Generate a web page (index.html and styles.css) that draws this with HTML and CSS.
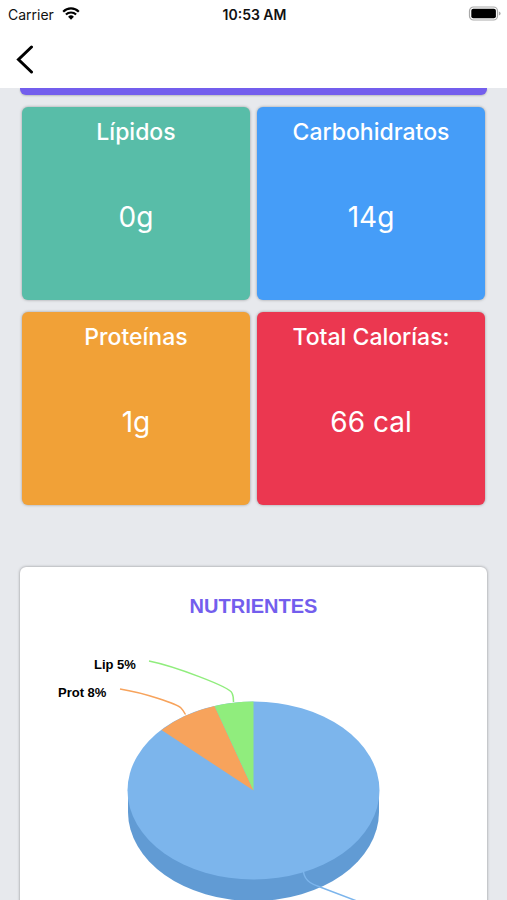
FILE: index.html
```html
<!DOCTYPE html>
<html lang="es">
<head>
  <meta charset="UTF-8">
  <meta name="viewport" content="width=device-width, initial-scale=1">
  <title>Nutrientes</title>
  <link rel="stylesheet" href="styles.css">
</head>
<body>

  <header class="header">
    <div class="status-bar">
      <div class="status-left">
        <span>Carrier</span>
        <svg width="18" height="14" viewBox="0 0 18 14" aria-hidden="true">
          <path d="M1.2 4.7 A11 11 0 0 1 16.8 4.7" fill="none" stroke="#000" stroke-width="2.2"/>
          <path d="M3.9 7.6 A7.2 7.2 0 0 1 14.1 7.6" fill="none" stroke="#000" stroke-width="2.1"/>
          <path d="M9 12.7 L6.1 9.8 A4.1 4.1 0 0 1 11.9 9.8 Z" fill="#000"/>
        </svg>
      </div>
      <span class="status-time">10:53 AM</span>
      <div class="status-right">
        <svg width="33" height="16" viewBox="0 0 33 16" aria-hidden="true">
          <rect x="1.5" y="1" width="28" height="13" rx="4" fill="#fff" stroke="#a9a9a9" stroke-width="1.2"/>
          <rect x="3.3" y="2.8" width="24.6" height="9.4" rx="2" fill="#000"/>
          <path d="M30.9 5.4 Q32.6 6 32.6 7.5 Q32.6 9 30.9 9.6 Z" fill="#a9a9a9"/>
        </svg>
      </div>
    </div>
    <nav class="nav-bar">
      <button type="button" class="back-button" aria-label="Volver">
        <svg width="18" height="30" viewBox="0 0 18 30" aria-hidden="true">
          <path d="M15.5 3 L2.5 15.5 L15.5 28" fill="none" stroke="#000" stroke-width="3" stroke-linecap="round"/>
        </svg>
      </button>
    </nav>
  </header>

  <main class="content">
    <div class="banner"></div>

    <section class="cards">
      <div class="card lipidos">
        <h2>Lípidos</h2>
        <p>0g</p>
      </div>
      <div class="card carbohidratos">
        <h2>Carbohidratos</h2>
        <p>14g</p>
      </div>
      <div class="card proteinas">
        <h2>Proteínas</h2>
        <p>1g</p>
      </div>
      <div class="card calorias">
        <h2>Total Calorías:</h2>
        <p>66 cal</p>
      </div>
    </section>

    <section class="chart-card">
      <h3>NUTRIENTES</h3>
      <svg class="chart" viewBox="0 0 467 300" role="img" aria-label="Nutrientes">
        <!-- borde inferior del pastel -->
        <path d="M108 160 V182 A125.5 89 0 0 0 359 182 V160 Z" fill="#619bd4"/>
        <ellipse cx="233.5" cy="160.5" rx="126" ry="89" fill="#7cb5ec"/>
        <path d="M233.5 160.5 L141.5 100 A126 89 0 0 1 194.5 76 Z" fill="#f7a35c"/>
        <path d="M233.5 160.5 L194.5 76 A126 89 0 0 1 233.5 71.5 Z" fill="#90ed7d"/>
        <!-- conectores -->
        <path class="line" d="M129 31 C154 36 210 57 212 63 Q213.5 66 213.5 72" stroke="#90ed7d"/>
        <path class="line" d="M100 59 C125 63 157 74 161 78 Q163 80 165.5 84.5" stroke="#f7a35c"/>
        <path class="line" d="M283.5 242 C285 252 294 255 300 257 L350 276" stroke="#7cb5ec"/>
        <text x="74" y="39">Lip 5%</text>
        <text x="38" y="67">Prot 8%</text>
      </svg>
    </section>
  </main>

</body>
</html>
```

FILE: styles.css
```css
* {
  box-sizing: border-box;
}

body {
  font-family: Inter, "Liberation Sans", sans-serif;
  background-color: #e7e9ed;
  display: flex;
  flex-direction: column;
  height: 100vh;
  margin: 0;
}

h2,
h3,
p {
  margin: 0;
}

.header {
  flex: none;
  background-color: #ffffff;
}

.status-bar {
  display: grid;
  grid-template-columns: 1fr auto 1fr;
  align-items: center;
  height: 28px;
  padding: 0 6px 0 8px;
  font-size: 14px;
  color: #111;
}

.status-left {
  display: flex;
  align-items: center;
  gap: 8px;
}

.status-time {
  font-weight: 600;
}

.status-right {
  display: flex;
  justify-content: flex-end;
}

.nav-bar {
  display: flex;
  align-items: center;
  height: 60px;
  padding: 2px 16px 0;
}

.back-button {
  display: flex;
  padding: 0;
  border: none;
  background: none;
  cursor: pointer;
}

.content {
  flex: 1;
  min-height: 0;
  overflow-y: auto;
  scrollbar-width: none;
}

.banner {
  height: 7px;
  margin: 0 20px;
  background-color: #735eed;
  border-radius: 0 0 6px 6px;
  box-shadow: 0 1px 2px rgba(0, 0, 0, 0.2);
}

.cards {
  display: grid;
  grid-template-columns: 1fr 1fr;
  gap: 12px 7px;
  padding: 12px 22px 0;
}

.card {
  height: 193px;
  padding-top: 11px;
  border-radius: 6px;
  box-shadow: 0 0 3px rgba(0, 0, 0, 0.35);
  color: #ffffff;
  text-align: center;
}

.card h2 {
  font-size: 23px;
  font-weight: 500;
  line-height: 28px;
}

.card p {
  margin-top: 54px;
  font-size: 28px;
  line-height: 34px;
}

.lipidos {
  background-color: #58bda8;
}

.carbohidratos {
  background-color: #459df8;
}

.proteinas {
  background-color: #f1a137;
}

.calorias {
  background-color: #eb3750;
}

.chart-card {
  margin: 62px 20px 20px;
  padding-top: 27px;
  background-color: #ffffff;
  border-radius: 6px;
  box-shadow: 0 0 3px rgba(0, 0, 0, 0.4);
}

.chart-card h3 {
  font-family: "Liberation Sans", Arial, sans-serif;
  font-size: 20px;
  line-height: 24px;
  text-align: center;
  color: #735eed;
}

.chart {
  display: block;
  width: 100%;
  margin-top: 12px;
}

.chart text {
  font-family: "Liberation Sans", Arial, sans-serif;
  font-size: 13px;
  font-weight: bold;
  fill: #000;
}

.chart .line {
  fill: none;
  stroke-width: 1.5;
}
```
